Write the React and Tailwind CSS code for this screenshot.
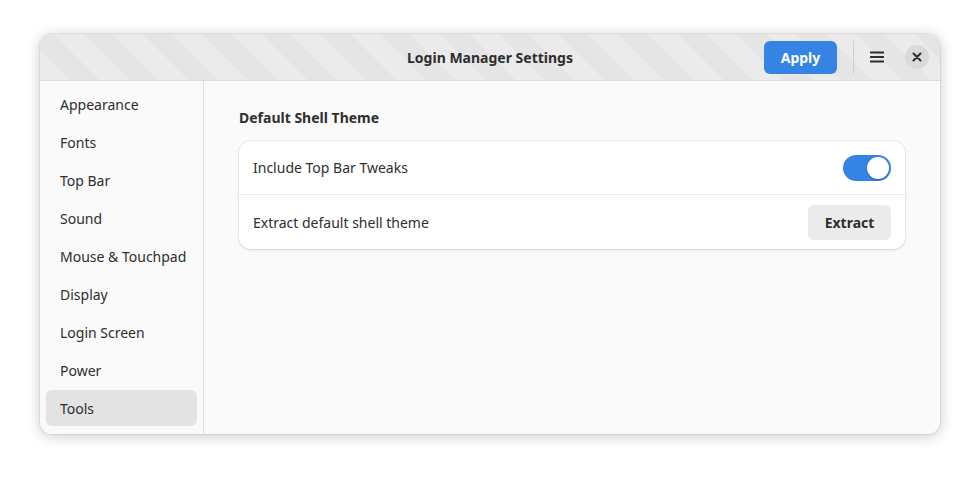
import React from 'react';

const sections = [
  'Appearance',
  'Fonts',
  'Top Bar',
  'Sound',
  'Mouse & Touchpad',
  'Display',
  'Login Screen',
  'Power',
  'Tools',
];

export default function App() {
  return (
    <div
      className="w-[980px] h-[480px] bg-white pt-[34px] pl-[40px] text-[#2e2e2e]"
      style={{ fontFamily: '"Noto Sans", "Open Sans", sans-serif' }}
    >
      <div className="w-[900px] h-[400px] rounded-[12px] bg-[#fafafa] overflow-hidden flex flex-col shadow-[0_2px_14px_rgba(0,0,0,0.22),0_0_0_1px_rgba(0,0,0,0.06)]">
        {/* Header bar */}
        <div className="relative h-[47px] shrink-0 border-b border-[#dcdcdc] bg-[repeating-linear-gradient(45deg,#ebebeb_0px,#ebebeb_21px,#e5e5e5_21px,#e5e5e5_42px)] flex items-center justify-end pr-[11px]">
          <div className="absolute inset-0 flex items-center justify-center pointer-events-none">
            <span className="text-[14px] font-bold text-[#2e2e2e]">Login Manager Settings</span>
          </div>
          <button className="relative h-[33px] w-[73px] rounded-[6px] bg-[#3584e4] text-white text-[14px] font-bold">
            Apply
          </button>
          <div className="relative w-px h-[33px] bg-[#d0d0d0] ml-[16px] mr-[15px]" />
          <button className="relative w-[16px] h-[16px] flex items-center justify-center">
            <svg width="16" height="16" viewBox="0 0 16 16">
              <rect x="1" y="2.5" width="14" height="2" rx="0.5" fill="#2e2e2e" />
              <rect x="1" y="7" width="14" height="2" rx="0.5" fill="#2e2e2e" />
              <rect x="1" y="11.5" width="14" height="2" rx="0.5" fill="#2e2e2e" />
            </svg>
          </button>
          <button className="relative ml-[20px] w-[24px] h-[24px] rounded-full bg-[#dadada] flex items-center justify-center">
            <svg width="10" height="10" viewBox="0 0 10 10">
              <path d="M1.5 1.5 L8.5 8.5 M8.5 1.5 L1.5 8.5" stroke="#2e2e2e" strokeWidth="2" strokeLinecap="round" />
            </svg>
          </button>
        </div>

        <div className="flex flex-1 min-h-0">
          {/* Sidebar */}
          <div className="w-[164px] shrink-0 border-r border-[#dedede] bg-[#fafafa] px-[6px] pt-[5px] flex flex-col gap-[2px]">
            {sections.map((s) => (
              <div
                key={s}
                className={`h-[36px] shrink-0 flex items-center pl-[14px] rounded-[6px] text-[14px] ${
                  s === 'Tools' ? 'bg-[#e3e3e3]' : ''
                }`}
              >
                {s}
              </div>
            ))}
          </div>

          {/* Content */}
          <div className="flex-1 px-[35px] pt-[27px]">
            <div className="text-[14px] font-bold text-[#2e2e2e] leading-[20px]">Default Shell Theme</div>
            <div className="mt-[13px] bg-white rounded-[12px] shadow-[0_0_0_1px_rgba(0,0,0,0.04),0_1px_3px_rgba(0,0,0,0.12)]">
              <div className="h-[54px] flex items-center justify-between pl-[14px] pr-[14px] border-b border-[#ebebeb]">
                <span className="text-[14px]">Include Top Bar Tweaks</span>
                <div className="w-[48px] h-[26px] rounded-full bg-[#3584e4] flex items-center justify-end pr-[2px]">
                  <div className="w-[22px] h-[22px] rounded-full bg-white shadow-[0_1px_2px_rgba(0,0,0,0.25)]" />
                </div>
              </div>
              <div className="h-[54px] flex items-center justify-between pl-[14px] pr-[14px]">
                <span className="text-[14px]">Extract default shell theme</span>
                <button className="h-[35px] w-[83px] rounded-[6px] bg-[#ebebeb] text-[14px] font-bold text-[#2e2e2e]">
                  Extract
                </button>
              </div>
            </div>
          </div>
        </div>
      </div>
    </div>
  );
}
